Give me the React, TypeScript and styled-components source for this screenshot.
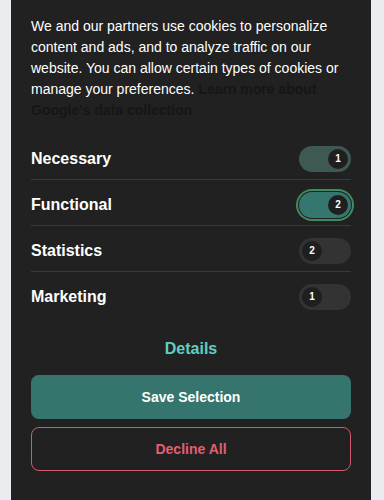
import React, { useState } from 'react'
import styled, { createGlobalStyle, css } from 'styled-components'

const GlobalStyle = createGlobalStyle`
  body {
    margin: 0;
    background: #ebecf0;
    font-family: "Liberation Sans", Arial, sans-serif;
  }
`

const Panel = styled.div`
  box-sizing: border-box;
  width: 360px;
  min-height: 500px;
  margin: 0 11px;
  padding: 16px 20px 20px;
  background: #212121;
  color: #fff;
`

const Intro = styled.p`
  margin: 0;
  font-size: 14px;
  line-height: 21px;
  color: #fff;
`

const LearnMore = styled.a`
  font-weight: bold;
  color: #161616;
  text-decoration: none;
`

const List = styled.div`
  margin-top: 13px;
  display: flex;
  flex-direction: column;
`

const Row = styled.div<{ $last?: boolean }>`
  display: flex;
  align-items: center;
  justify-content: space-between;
  padding: 12px 0 7px;
  border-bottom: 1px solid ${p => (p.$last ? 'transparent' : '#3a3a3a')};
`

const Label = styled.span`
  font-size: 16px;
  font-weight: bold;
  line-height: 26px;
`

const Toggle = styled.button<{ $on: boolean; $locked?: boolean; $focus?: boolean }>`
  position: relative;
  width: 52px;
  height: 26px;
  padding: 0;
  border: 0;
  border-radius: 13px;
  cursor: pointer;
  background: ${p => (p.$locked ? '#3e5854' : p.$on ? '#35776e' : '#333333')};
  ${p =>
    p.$focus &&
    css`
      box-shadow: 0 0 0 1px #212121, 0 0 0 3px #3f8b5f;
    `}
`

const Knob = styled.span<{ $on: boolean }>`
  position: absolute;
  top: 3px;
  left: ${p => (p.$on ? '29px' : '3px')};
  width: 20px;
  height: 20px;
  border-radius: 50%;
  background: #1f1f1f;
  color: #fff;
  font-family: "Liberation Sans", Arial, sans-serif;
  font-size: 10px;
  font-weight: bold;
  line-height: 20px;
  text-align: center;
`

const DetailsLink = styled.button`
  display: block;
  margin: 21px auto 0;
  padding: 0;
  border: 0;
  background: none;
  color: #5ecfc5;
  font-family: inherit;
  font-size: 16px;
  font-weight: bold;
  line-height: 20px;
  cursor: pointer;
`

const ActionButton = styled.button<{ $variant: 'primary' | 'danger' }>`
  display: block;
  box-sizing: border-box;
  width: 100%;
  height: 44px;
  border-radius: 8px;
  font-family: inherit;
  font-size: 14px;
  font-weight: bold;
  cursor: pointer;
  ${p =>
    p.$variant === 'primary'
      ? css`
          margin-top: 16px;
          border: 0;
          background: #36756e;
          color: #fff;
        `
      : css`
          margin-top: 8px;
          border: 1px solid #d25a6c;
          background: transparent;
          color: #e25f71;
        `}
`

const categories = [
  { name: 'Necessary', count: 1, locked: true, on: true },
  { name: 'Functional', count: 2, on: true, focus: true },
  { name: 'Statistics', count: 2, on: false },
  { name: 'Marketing', count: 1, on: false },
]

export default function App() {
  const [state, setState] = useState(categories.map(c => c.on))

  return (
    <>
      <GlobalStyle />
      <Panel>
        <Intro>
          We and our partners use cookies to personalize content and ads, and to analyze
          traffic on our website. You can allow certain types of cookies or manage your
          preferences. <LearnMore href="#">Learn more about Google's data collection</LearnMore>
        </Intro>
        <List>
          {categories.map((c, i) => (
            <Row key={c.name} $last={i === categories.length - 1}>
              <Label>{c.name}</Label>
              <Toggle
                $on={state[i]}
                $locked={c.locked}
                $focus={c.focus}
                onClick={() =>
                  !c.locked && setState(s => s.map((v, j) => (j === i ? !v : v)))
                }
              >
                <Knob $on={state[i]}>{c.count}</Knob>
              </Toggle>
            </Row>
          ))}
        </List>
        <DetailsLink>Details</DetailsLink>
        <ActionButton $variant="primary">Save Selection</ActionButton>
        <ActionButton $variant="danger">Decline All</ActionButton>
      </Panel>
    </>
  )
}
